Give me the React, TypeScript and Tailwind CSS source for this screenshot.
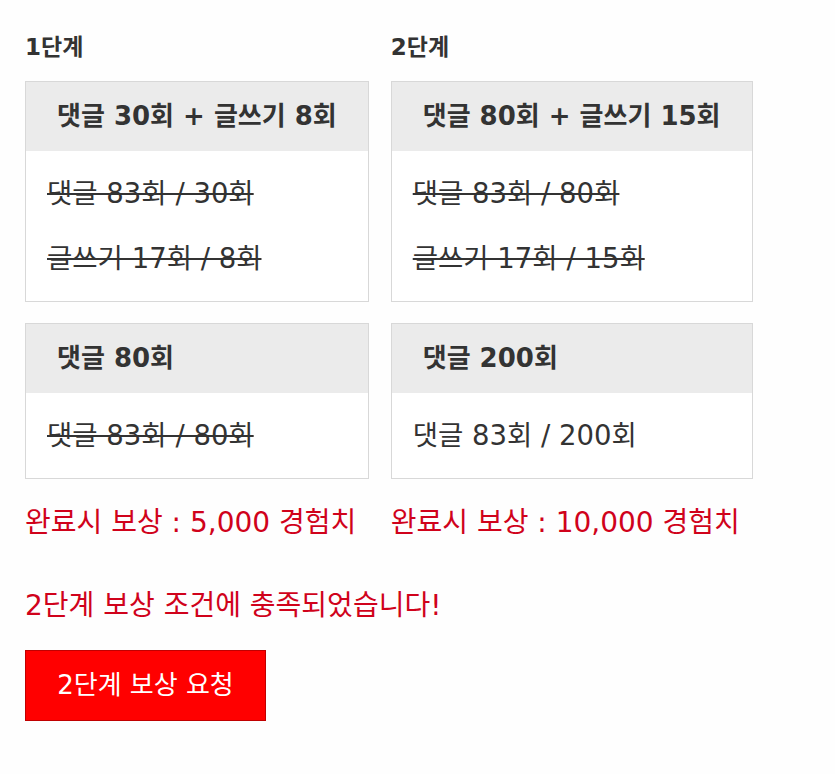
const font = { fontFamily: '"DejaVu Sans", "Noto Sans CJK KR", sans-serif' }

type Box = { title: string; lines: { text: string; done: boolean }[] }

const stages: { name: string; boxes: Box[]; reward: string }[] = [
  {
    name: '1단계',
    boxes: [
      {
        title: '댓글 30회 + 글쓰기 8회',
        lines: [
          { text: '댓글 83회 / 30회', done: true },
          { text: '글쓰기 17회 / 8회', done: true },
        ],
      },
      { title: '댓글 80회', lines: [{ text: '댓글 83회 / 80회', done: true }] },
    ],
    reward: '완료시 보상 : 5,000 경험치',
  },
  {
    name: '2단계',
    boxes: [
      {
        title: '댓글 80회 + 글쓰기 15회',
        lines: [
          { text: '댓글 83회 / 80회', done: true },
          { text: '글쓰기 17회 / 15회', done: true },
        ],
      },
      { title: '댓글 200회', lines: [{ text: '댓글 83회 / 200회', done: false }] },
    ],
    reward: '완료시 보상 : 10,000 경험치',
  },
]

const App = () => {
  return (
    <div className="min-h-screen bg-[#fefefe] pl-[25px] pt-[30px]" style={font}>
      <div className="flex gap-[22px]">
        {stages.map((stage) => (
          <div key={stage.name} className="flex w-fit flex-col">
            <h3 className="text-[23px] font-bold leading-[34px] text-[#333]">{stage.name}</h3>
            <div className="mt-[17px] flex flex-col gap-[21px]">
              {stage.boxes.map((box) => (
                <div key={box.title} className="border border-[#d8d8d8] bg-white">
                  <div className="flex h-[69px] items-center bg-[#ebebeb] px-[31px] text-[26px] font-bold text-[#333]">
                    {box.title}
                  </div>
                  <div className="flex flex-col px-[21px] py-[10px]">
                    {box.lines.map((line) => (
                      <p
                        key={line.text}
                        className={`flex h-[65px] items-center text-[27.5px] text-[#333] ${line.done ? 'line-through' : ''}`}
                      >
                        {line.text}
                      </p>
                    ))}
                  </div>
                </div>
              ))}
            </div>
            <p className="mt-[24px] text-[28px] leading-[40px] text-[#d0021b]">{stage.reward}</p>
          </div>
        ))}
      </div>
      <p className="mt-[43px] text-[28px] leading-[40px] text-[#d0021b]">2단계 보상 조건에 충족되었습니다!</p>
      <button className="mt-[24px] h-[71px] w-[241px] border border-[#c00000] bg-[#ff0000] text-[26px] text-white">
        2단계 보상 요청
      </button>
    </div>
  )
}
export default App
